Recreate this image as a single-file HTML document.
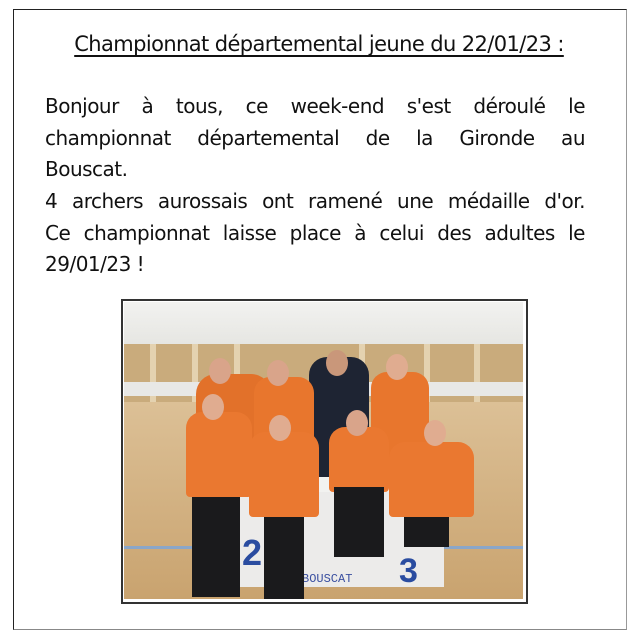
<!DOCTYPE html>
<html><head><meta charset="utf-8"><style>
html,body{margin:0;padding:0;background:#fff;width:638px;height:643px;overflow:hidden}
.box{position:absolute;left:13px;top:9px;width:612px;height:619px;border:1px solid #222;border-right-color:#999;border-bottom-color:#888}
.t{position:absolute;left:0;width:638px;text-align:center;top:32px;font:21px "DejaVu Sans","Liberation Sans",sans-serif;letter-spacing:-0.6px;color:#111}
.t span{text-decoration:underline;text-decoration-thickness:2px;text-underline-offset:4px}
.l{position:absolute;left:45px;width:540px;font:20px "DejaVu Sans","Liberation Sans",sans-serif;letter-spacing:-0.5px;color:#111;text-align:justify;text-align-last:justify;white-space:nowrap;line-height:24px}
.n{text-align-last:left}
.ph{position:absolute;left:121px;top:299px;width:401px;height:299px;border:2px solid #333;background:#fff;padding:1px}
.in{position:relative;width:399px;height:297px;overflow:hidden;background:#d8b88a}
.p{position:absolute;top:42px;width:6px;height:58px;background:#e4d2b0}
</style></head><body>
<div class="box"></div>
<div class="t"><span>Championnat départemental jeune du 22/01/23 :</span></div>
<div class="l" style="top:94px">Bonjour à tous, ce week-end s'est déroulé le</div>
<div class="l" style="top:126px">championnat départemental de la Gironde au</div>
<div class="l n" style="top:157px">Bouscat.</div>
<div class="l" style="top:189px">4 archers aurossais ont ramené une médaille d'or.</div>
<div class="l" style="top:221px">Ce championnat laisse place à celui des adultes le</div>
<div class="l n" style="top:252px">29/01/23 !</div>
<div class="ph"><div class="in">
<div style="position:absolute;left:0;top:0;width:399px;height:42px;background:linear-gradient(#f2f2f0,#e6e6e2)"></div>
<div style="position:absolute;left:0;top:42px;width:399px;height:58px;background:#c9ab7c"></div>
<div class="p" style="left:26px"></div><div class="p" style="left:68px"></div><div class="p" style="left:110px"></div><div class="p" style="left:235px"></div><div class="p" style="left:300px"></div><div class="p" style="left:350px"></div>
<div style="position:absolute;left:0;top:80px;width:399px;height:14px;background:#e8e8e6"></div>
<div style="position:absolute;left:0;top:100px;width:399px;height:197px;background:linear-gradient(#dcc096,#c9a36f)"></div>
<div style="position:absolute;left:0;top:244px;width:399px;height:3px;background:#8aa6c8"></div>
<div style="position:absolute;left:105px;top:185px;width:215px;height:100px;background:#ecebea"></div>
<div style="position:absolute;left:180px;top:170px;width:95px;height:20px;background:#f2f2f0"></div>
<div style="position:absolute;left:118px;top:230px;font:bold 36px 'Liberation Sans';color:#2a4ca0">2</div>
<div style="position:absolute;left:275px;top:250px;font:bold 34px 'Liberation Sans';color:#2a4ca0">3</div>
<div style="position:absolute;left:178px;top:270px;font:12px 'Liberation Mono';color:#3a4fa0">BOUSCAT</div>
<div style="position:absolute;left:185px;top:55px;width:60px;height:120px;background:#1e2433;border-radius:18px 18px 4px 4px"></div>
<div style="position:absolute;left:72px;top:72px;width:75px;height:70px;background:#e2712a;border-radius:20px 20px 0 0"></div>
<div style="position:absolute;left:130px;top:75px;width:60px;height:70px;background:#e8762d;border-radius:16px 16px 0 0"></div>
<div style="position:absolute;left:247px;top:70px;width:58px;height:90px;background:#e8762d;border-radius:16px 16px 0 0"></div>
<div style="position:absolute;left:62px;top:110px;width:66px;height:85px;background:#ea7830;border-radius:16px 16px 4px 4px"></div>
<div style="position:absolute;left:68px;top:195px;width:48px;height:100px;background:#1a1a1c"></div>
<div style="position:absolute;left:125px;top:130px;width:70px;height:85px;background:#ea7830;border-radius:16px 16px 4px 4px"></div>
<div style="position:absolute;left:140px;top:215px;width:40px;height:82px;background:#1a1a1c"></div>
<div style="position:absolute;left:205px;top:125px;width:60px;height:65px;background:#ea7830;border-radius:16px 16px 4px 4px"></div>
<div style="position:absolute;left:210px;top:185px;width:50px;height:70px;background:#1a1a1c"></div>
<div style="position:absolute;left:265px;top:140px;width:85px;height:75px;background:#ea7830;border-radius:16px 16px 4px 4px"></div>
<div style="position:absolute;left:280px;top:215px;width:45px;height:30px;background:#1a1a1c"></div>
<div style="position:absolute;left:85px;top:56px;width:22px;height:26px;background:#d9a48a;border-radius:50%"></div>
<div style="position:absolute;left:143px;top:58px;width:22px;height:26px;background:#d9a48a;border-radius:50%"></div>
<div style="position:absolute;left:202px;top:48px;width:22px;height:26px;background:#c9977a;border-radius:50%"></div>
<div style="position:absolute;left:262px;top:52px;width:22px;height:26px;background:#e0ac90;border-radius:50%"></div>
<div style="position:absolute;left:78px;top:92px;width:22px;height:26px;background:#e0ac90;border-radius:50%"></div>
<div style="position:absolute;left:145px;top:113px;width:22px;height:26px;background:#e0ac90;border-radius:50%"></div>
<div style="position:absolute;left:222px;top:108px;width:22px;height:26px;background:#d9a48a;border-radius:50%"></div>
<div style="position:absolute;left:300px;top:118px;width:22px;height:26px;background:#e0ac90;border-radius:50%"></div>
</div></div>
</body></html>
